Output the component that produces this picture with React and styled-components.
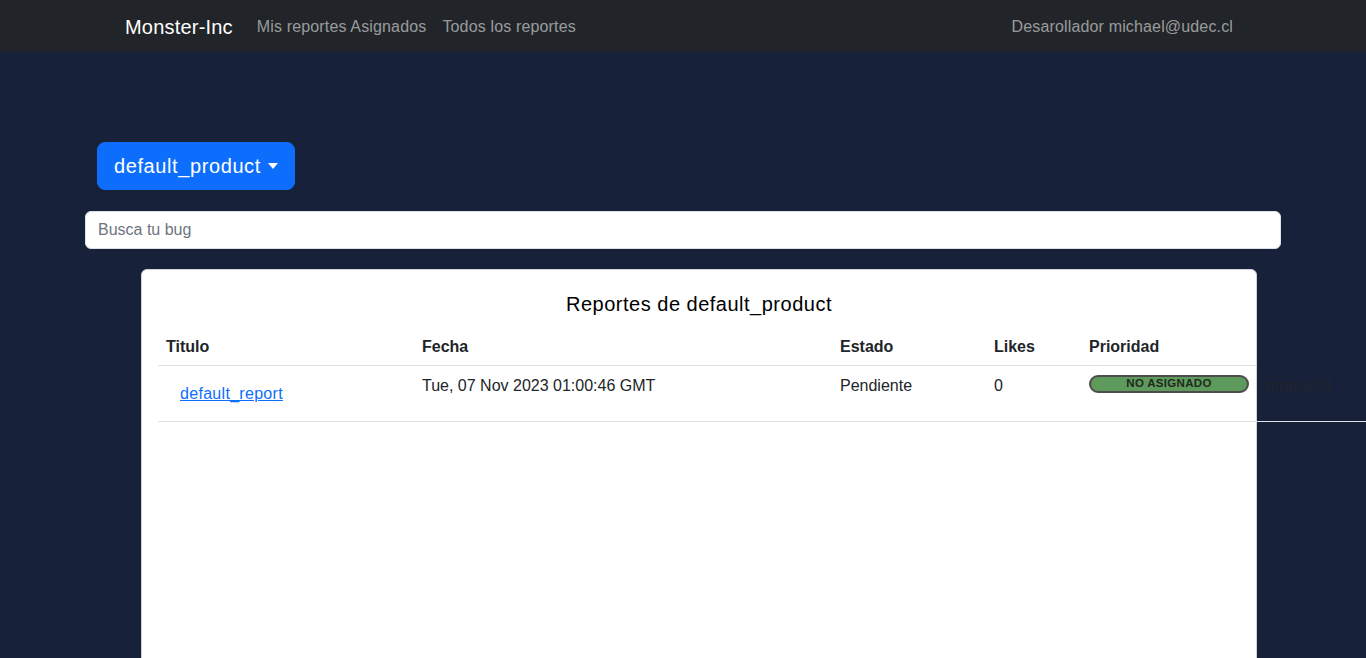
import React from "react";
import styled, { createGlobalStyle } from "styled-components";

const GlobalStyle = createGlobalStyle`
  html, body {
    margin: 0;
    padding: 0;
    overflow-x: hidden;
  }
  body {
    background: #172139;
    font-family: "Liberation Sans", Arial, sans-serif;
    font-size: 16px;
    line-height: 1.5;
    color: #212529;
  }
  * { box-sizing: border-box; }
`;

const Navbar = styled.nav`
  height: 52px;
  background: #212529;
`;

const NavContainer = styled.div`
  width: 1140px;
  height: 100%;
  margin: 0 auto;
  padding: 2px 12px 0;
  display: flex;
  align-items: center;
  justify-content: space-between;
`;

const NavLeft = styled.div`
  display: flex;
  align-items: center;
`;

const Brand = styled.a`
  font-size: 20px;
  line-height: 30px;
  letter-spacing: 0.2px;
  color: #fff;
  margin-right: 16px;
  text-decoration: none;
`;

const NavLink = styled.a`
  padding: 8px;
  color: rgba(255, 255, 255, 0.55);
  text-decoration: none;
  line-height: 24px;
  letter-spacing: 0.15px;
`;

const Main = styled.main`
  padding-top: 90px;
`;

const DropdownRow = styled.div`
  padding-left: 97px;
`;

const DropdownButton = styled.button`
  display: inline-flex;
  align-items: center;
  height: 48px;
  padding: 8px 16px;
  font-family: inherit;
  font-size: 20px;
  line-height: 30px;
  letter-spacing: 0.6px;
  color: #fff;
  background: #0d6efd;
  border: 1px solid #0d6efd;
  border-radius: 8px;
  &::after {
    content: "";
    margin-left: 7px;
    border-top: 6px solid #fff;
    border-left: 5px solid transparent;
    border-right: 5px solid transparent;
  }
`;

const SearchInput = styled.input`
  display: block;
  margin: 21px 0 0 85px;
  width: 1196px;
  height: 38px;
  padding: 6px 12px;
  font-family: inherit;
  font-size: 16px;
  color: #212529;
  background: #fff;
  border: 1px solid #dee2e6;
  border-radius: 6px;
  outline: none;
  &::placeholder {
    color: #6c757d;
  }
`;

const Card = styled.section`
  margin: 20px 0 0 141px;
  width: 1116px;
  min-height: 420px;
  background: #fff;
  border: 1px solid #ced4da;
  border-radius: 6px;
  padding: 22px 16px 16px;
`;

const CardTitle = styled.h5`
  margin: 0 0 9px;
  font-size: 20px;
  font-weight: 500;
  line-height: 24px;
  letter-spacing: 0.5px;
  text-align: center;
  color: #000;
`;

const Table = styled.table`
  border-collapse: collapse;
  table-layout: fixed;
  width: 1230px;
`;

const Th = styled.th`
  text-align: left;
  font-weight: 700;
  padding: 10px 8px 6px;
  line-height: 24px;
  border-bottom: 1px solid #dee2e6;
`;

const Td = styled.td`
  vertical-align: top;
  padding: 8px 8px 8px;
  line-height: 24px;
  border-bottom: 1px solid #dee2e6;
  color: #212529;
`;

const LinkCell = styled(Td)`
  padding: 9px 8px 8px 9px;
`;

const LinkButton = styled.a`
  display: inline-block;
  padding: 6px 12px;
  border: 1px solid transparent;
  line-height: 24px;
  color: #0d6efd;
  text-decoration: underline;
  letter-spacing: 0.3px;
`;

const Badge = styled.span`
  display: flex;
  align-items: center;
  justify-content: center;
  width: 160px;
  height: 18px;
  margin-top: 1px;
  background: #5e9a5b;
  border: 2px solid #4c4c4c;
  border-radius: 9px;
  font-size: 11.5px;
  font-weight: 700;
  letter-spacing: 0.3px;
  line-height: 1;
  color: #1f2a1f;
`;

const cols = [256, 418, 154, 95, 176, 131];

export default function App() {
  return (
    <>
      <GlobalStyle />
      <Navbar>
        <NavContainer>
          <NavLeft>
            <Brand href="#">Monster-Inc</Brand>
            <NavLink href="#">Mis reportes Asignados</NavLink>
            <NavLink href="#">Todos los reportes</NavLink>
          </NavLeft>
          <NavLink href="#">Desarollador michael@udec.cl</NavLink>
        </NavContainer>
      </Navbar>
      <Main>
        <DropdownRow>
          <DropdownButton>default_product</DropdownButton>
        </DropdownRow>
        <SearchInput placeholder="Busca tu bug" />
        <Card>
          <CardTitle>Reportes de default_product</CardTitle>
          <Table>
            <colgroup>
              {cols.map((w, i) => (
                <col key={i} style={{ width: w }} />
              ))}
            </colgroup>
            <thead>
              <tr>
                <Th>Titulo</Th>
                <Th>Fecha</Th>
                <Th>Estado</Th>
                <Th>Likes</Th>
                <Th>Prioridad</Th>
              </tr>
            </thead>
            <tbody>
              <tr>
                <LinkCell>
                  <LinkButton href="#">default_report</LinkButton>
                </LinkCell>
                <Td>Tue, 07 Nov 2023 01:00:46 GMT</Td>
                <Td>Pendiente</Td>
                <Td>0</Td>
                <Td>
                  <Badge>NO ASIGNADO</Badge>
                </Td>
                <Td>product-1</Td>
              </tr>
            </tbody>
          </Table>
        </Card>
      </Main>
    </>
  );
}
